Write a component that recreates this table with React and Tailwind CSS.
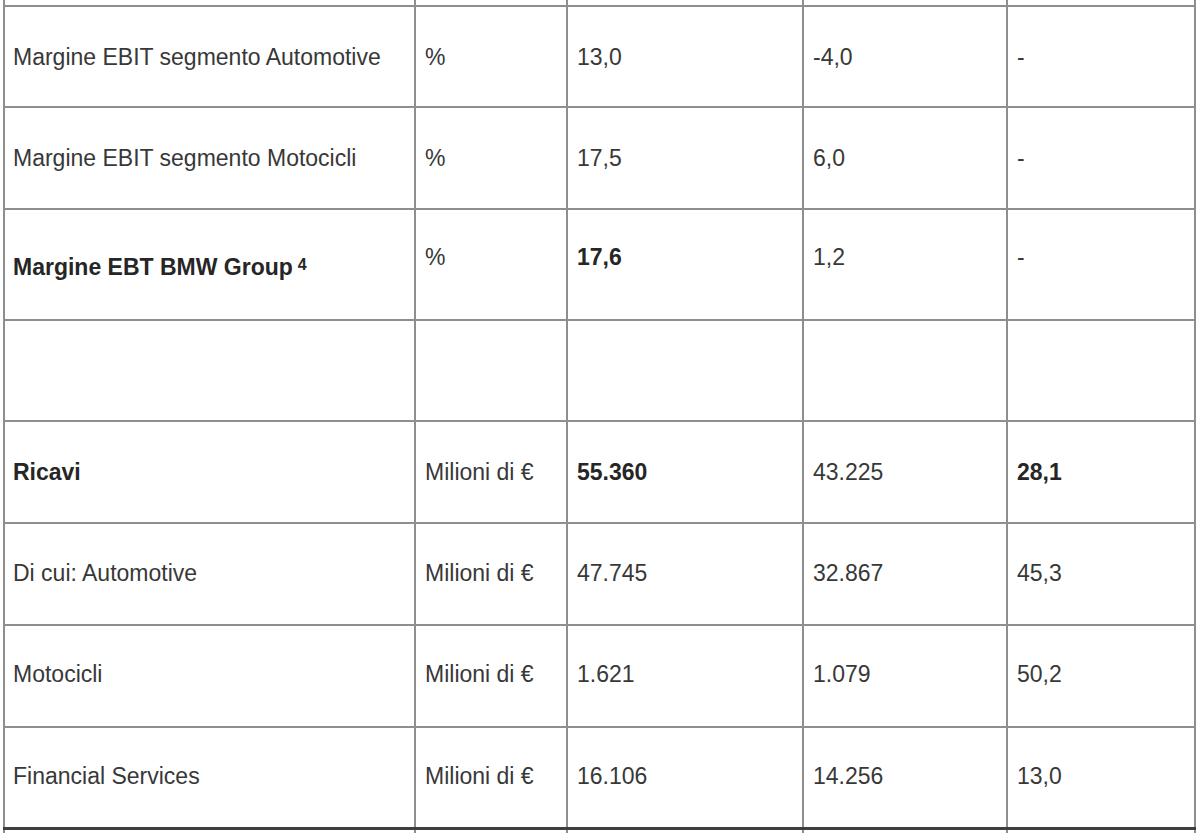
import React from "react";

const rows = [
  { h: "h-[99px]", pt: "pt-[37px]", cells: ["Margine EBIT segmento Automotive", "%", "13,0", "-4,0", "-"] },
  { h: "h-[100px]", pt: "pt-[37px]", cells: ["Margine EBIT segmento Motocicli", "%", "17,5", "6,0", "-"] },
  { h: "h-[109px]", pt: "pt-[34px]", special: "ebt", cells: ["Margine EBT BMW Group", "%", "17,6", "1,2", "-"], bold: [0, 2] },
  { h: "h-[99px]", pt: "pt-[37px]", cells: ["", "", "", "", ""] },
  { h: "h-[100px]", pt: "pt-[37px]", cells: ["Ricavi", "Milioni di €", "55.360", "43.225", "28,1"], bold: [0, 2, 4] },
  { h: "h-[100px]", pt: "pt-[36px]", cells: ["Di cui: Automotive", "Milioni di €", "47.745", "32.867", "45,3"] },
  { h: "h-[100px]", pt: "pt-[35px]", cells: ["Motocicli", "Milioni di €", "1.621", "1.079", "50,2"] },
  { h: "h-[99px]", pt: "pt-[35px]", cells: ["Financial Services", "Milioni di €", "16.106", "14.256", "13,0"] },
];

const gridCls =
  "grid grid-cols-[409px_150px_234px_202px_186px] gap-x-[2px] gap-y-[2px] bg-[#8e8e8e] px-[2px] w-fit ml-[3px]";

export default function App() {
  return (
    <div
      className="w-[1199px] h-[833px] overflow-hidden bg-white text-[23px] leading-[26px] text-[#383838]"
      style={{ fontFamily: '"Liberation Sans", Arial, sans-serif' }}
    >
      <div className={gridCls}>
        {[0, 1, 2, 3, 4].map((i) => (
          <div key={"t" + i} className="h-[5px] bg-white" />
        ))}
        {rows.map((r, ri) =>
          r.cells.map((c, ci) => {
            const isBold = r.bold && r.bold.includes(ci);
            const pl = ci === 0 ? "pl-[8px]" : "pl-[9px]";
            let pt = r.pt;
            if (r.special === "ebt" && ci === 0) pt = "pt-[44px]";
            return (
              <div
                key={ri + "-" + ci}
                className={`${r.h} ${pt} ${pl} bg-white whitespace-nowrap ${
                  isBold ? "font-bold text-[#262626]" : ""
                }`}
              >
                {c}
                {r.special === "ebt" && ci === 0 ? (
                  <span className="relative -top-[5px] ml-[5px] text-[16px] font-bold">4</span>
                ) : null}
              </div>
            );
          })
        )}
      </div>
      <div className="h-[3px] w-[1193px] ml-[3px] bg-[#3f3f3f]" />
      <div className={gridCls}>
        {[0, 1, 2, 3, 4].map((i) => (
          <div key={"b" + i} className="h-[10px] bg-white" />
        ))}
      </div>
    </div>
  );
}
